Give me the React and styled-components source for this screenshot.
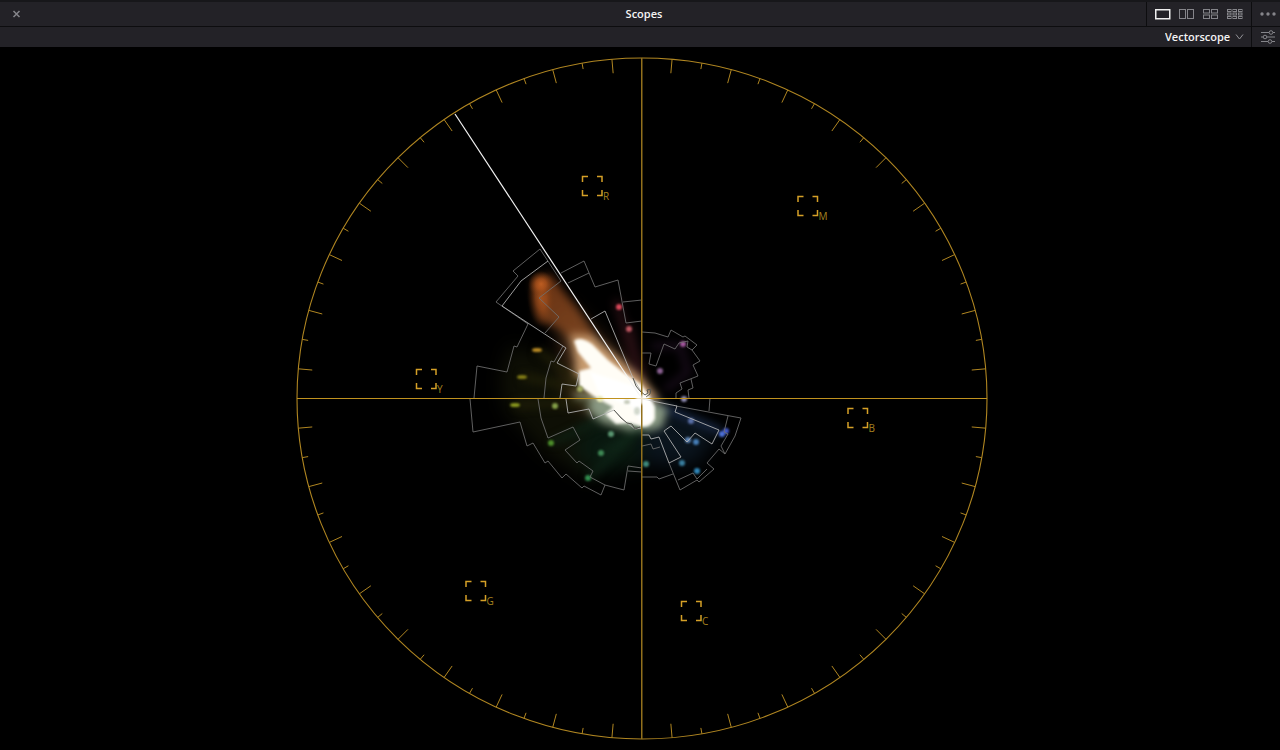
import React from 'react';
import styled, { createGlobalStyle } from 'styled-components';

const GlobalStyle = createGlobalStyle`
  * { box-sizing: border-box; }
  body {
    margin: 0;
    background: #000;
    color: #f4f4f4;
    font-family: "Open Sans", sans-serif;
    font-size: 11px;
    overflow: hidden;
  }
`;

const Page = styled.div`
  display: flex;
  flex-direction: column;
  height: 100vh;
`;

const TitleBar = styled.header`
  display: grid;
  grid-template-columns: 1fr auto 1fr;
  align-items: center;
  flex: none;
  height: 27px;
  background: #232227;
  border-top: 2px solid #17171a;
  border-bottom: 1px solid #0d0d0f;
`;

const Title = styled.h1`
  margin: 0 0 0 8px;
  font-size: 11px;
  line-height: 24px;
  font-weight: 600;
`;

const ToolBar = styled.div`
  display: flex;
  justify-content: flex-end;
  align-items: stretch;
  flex: none;
  height: 20px;
  background: #232227;
`;

const IconButton = styled.button`
  display: flex;
  align-items: center;
  justify-content: center;
  width: ${(p) => p.$width}px;
  height: 100%;
  padding: 0;
  border: 0;
  background: none;
  color: ${(p) => (p.$active ? '#efefef' : '#85858a')};
  svg { display: block; }
`;

const CloseCell = styled.div`
  padding-left: 8px;
  height: 24px;
`;

const Actions = styled.div`
  display: flex;
  justify-content: flex-end;
  height: 24px;
`;

const LayoutGroup = styled.div`
  display: flex;
  padding: 0 4px 0 3px;
  border-left: 1px solid #0d0d0f;
`;

const EndCell = styled.div`
  width: 29px;
  padding-left: 3px;
  border-left: 1px solid #0d0d0f;
`;

const ScopePicker = styled.label`
  position: relative;
  display: flex;
  align-items: center;
  padding-right: 7px;
  svg {
    position: absolute;
    right: 7px;
    pointer-events: none;
  }
`;

const ScopeSelect = styled.select`
  appearance: none;
  width: 79px;
  height: 20px;
  padding: 0;
  border: 0;
  background: transparent;
  color: #f4f4f4;
  font: 600 11px/20px "Open Sans", sans-serif;
`;

const ScopeArea = styled.main`
  flex: 1;
  min-height: 0;
  background: #000;
`;

const Plot = styled.svg`
  display: block;
  width: 100%;
  height: 100%;
`;

const TargetLabel = styled.text`
  fill: #a5801f;
  font-family: "Open Sans", sans-serif;
  font-size: 10px;
`;

const CX = 642;
const CY = 398.5;
const RX = 345;
const RY = 340.5;

const LAYOUTS = [
  { name: 'Single scope', cols: 1, rows: 1 },
  { name: 'Two scopes', cols: 2, rows: 1 },
  { name: 'Four scopes', cols: 2, rows: 2 },
  { name: 'Nine scopes', cols: 3, rows: 3 },
];

function LayoutIcon({ cols, rows }) {
  if (cols === 1) {
    return (
      <svg width="16" height="12" viewBox="0 0 16 12" fill="none" stroke="currentColor">
        <rect x="0.75" y="1.75" width="14" height="9" strokeWidth="1.5" />
      </svg>
    );
  }
  const w = cols === 2 ? 6 : 3.5;
  const h = rows === 1 ? 9 : rows === 2 ? 3.5 : 2;
  const stepX = cols === 2 ? 8 : 5.5;
  const stepY = rows === 2 ? 5.5 : 3.5;
  const cells = [];
  for (let r = 0; r < rows; r++) {
    for (let c = 0; c < cols; c++) {
      cells.push(
        <rect key={`${r}-${c}`} x={0.5 + c * stepX} y={1.5 + r * stepY} width={w} height={h} />
      );
    }
  }
  return (
    <svg width="16" height="12" viewBox="0 0 16 12" fill="none" stroke="currentColor">
      {cells}
    </svg>
  );
}

const TARGETS = [
  { label: 'R', x: 592, y: 186 },
  { label: 'M', x: 807.5, y: 206 },
  { label: 'Y', x: 426, y: 379 },
  { label: 'B', x: 857.5, y: 418 },
  { label: 'G', x: 475.5, y: 591 },
  { label: 'C', x: 691, y: 611 },
];

const DOTS = [
  [619, 307, '#d9475a'], [629, 329, '#bd5660'], [683, 344, '#a1559c'], [660, 371, '#8a6090'],
  [684, 399, '#9290b8'], [691, 421, '#5b70a8'], [722, 434, '#4d72d8'], [726, 431, '#4057c8'],
  [688, 440, '#5e86b8'], [696, 442, '#467fb8'], [682, 463, '#397fa0'], [697, 471, '#2f86b8'],
  [646, 464, '#3f8b7d'], [588, 478, '#318e4e'], [601, 453, '#3f8a55'], [611, 434, '#5b9872'],
  [551, 443, '#4c8e2a'], [555, 406, '#84a048'], [600, 399, '#e6eab8'], [580, 389, '#a5ad65'],
];

const STREAKS = [
  [515, 405, '#8a981e'], [522, 377, '#827c16'], [537, 350, '#b98a24'],
];

const DIM = [
  'M540 249 513 271 518 276 496 302 528 324 517 347 514 346 507 372 477 366 474 398',
  'M561 281 539 298 559 317 545 333M563 346 554 362 551 361 546 378 544 398',
  'M540 249 561 281M561 273 584 261 595 287 618 280 626 323 642 321M623 302 642 300M568 283 589 273',
  'M470 399 473 432 520 422 527 446 533 443 545 463 548 461 562 478 566 474 582 488 584 486 601 495 605 485 624 490 628 466 642 468M628 471 642 472',
  'M538 399 541 418 548 438 573 427 580 440 565 450 577 463 579 461 593 471 590 477 605 485',
  'M642 332 655 333 668 337 671 330 683 337 685 336 697 345 692 350 700 361 693 365 698 376 680 383 682 389 676 393 676 398',
  'M691 379 693 388 688 390 689 398M642 353 651 353 649 364 656 366 664 344 675 349 679 343 688 341 687 347 692 350',
  'M676 406 741 418 735 436 725 454 719 449 707 463 714 469 699 482 697 480 680 490 669 463',
  'M710 398 709 411M728 416 724 432 728 434 721 446 725 454M678 480 693 473 697 479 707 469',
  'M642 477 657 477 659 479 673 474M642 446 651 444 653 449 660 447',
];

const BRIGHT = [
  'M548 261 521 281 502 306 566 348 557 363 579 374 576 386 562 384 560 398',
  'M591 319 605 311 633 378 642 393',
  'M566 399 568 413 589 409 593 419 614 410 627 423 635 429 642 428',
  'M642 399 677 406 675 412 719 430 712 444 695 433 687 442 671 426 664 431 681 457 669 463 659 437 651 439 649 435 642 435',
];

function Graticule() {
  const ticks = [];
  for (let deg = 5; deg < 360; deg += 5) {
    if (deg % 90 !== 0) {
      const a = (deg * Math.PI) / 180;
      const len = deg % 10 === 5 ? 14 : 6;
      ticks.push(
        `M${CX + RX * Math.cos(a)} ${CY + RY * Math.sin(a)}L${CX + (RX - len) * Math.cos(a)} ${CY + (RY - len) * Math.sin(a)}`
      );
    }
  }
  return (
    <g fill="none" stroke="#b08621">
      <ellipse cx={CX} cy={CY} rx={RX} ry={RY} strokeWidth="1.1" />
      <path d={ticks.join('')} />
    </g>
  );
}

function Blur({ id, amount }) {
  return (
    <filter id={id} x="-50%" y="-50%" width="200%" height="200%" colorInterpolationFilters="sRGB">
      <feGaussianBlur stdDeviation={amount} />
    </filter>
  );
}

function Trace() {
  return (
    <g>
      <defs>
        <Blur id="soft1" amount="1.1" />
        <Blur id="soft2" amount="1.6" />
        <Blur id="soft4" amount="4" />
        <Blur id="soft9" amount="9" />
        <radialGradient id="ember">
          <stop offset="0" stopColor="#cc6524" />
          <stop offset="0.4" stopColor="#b4561d" stopOpacity="0.8" />
          <stop offset="1" stopColor="#6b3511" stopOpacity="0" />
        </radialGradient>
        <linearGradient id="tail" gradientUnits="userSpaceOnUse" x1="540" y1="280" x2="610" y2="375">
          <stop offset="0" stopColor="#713614" />
          <stop offset="0.6" stopColor="#7a4420" />
          <stop offset="1" stopColor="#d8a478" />
        </linearGradient>
      </defs>
      <g filter="url(#soft9)">
        <path d="M642 399 510 345 500 380 505 410 548 455 590 480 640 455Z" fill="#0e0f05" />
        <path d="M642 405 600 405 570 450 595 475 642 465Z" fill="#09180f" />
        <path d="M642 399 720 430 696 465 645 465Z" fill="#0a141d" />
        <path d="M642 375 560 300 560 340 570 400 600 415 630 410Z" fill="#452b17" />
      </g>
      <g filter="url(#soft4)" fill="none">
        <path d="M652 346 680 346 688 372 665 390" stroke="#180c1a" strokeWidth="6" />
        <path d="M642 392 616 300M642 380 629 325" stroke="#260e12" strokeWidth="7" />
        <path d="M533 280 550 274 578 310 614 365 598 372 560 329 538 320Z" fill="url(#tail)" opacity="0.95" />
        <path d="M570 334 592 336 642 378 658 397 658 424 625 427 594 410 570 387 576 365Z" fill="#c89c70" />
        <path d="M642 399 722 432" stroke="#22365e" strokeWidth="5" />
        <path d="M642 399 668 408 662 428 638 433 600 422 572 394Z" fill="#8a9a84" />
        <path d="M642 428 601 453M642 428 588 478M600 420 551 443" stroke="#0f2618" strokeWidth="5" />
        <path d="M590 390 537 350M590 390 522 377M590 402 515 405" stroke="#1f1e07" strokeWidth="7" />
      </g>
      <ellipse cx="541" cy="298" rx="14" ry="29" fill="url(#ember)" opacity="0.6" transform="rotate(-4 541 298)" />
      <circle cx="541" cy="284" r="13" fill="url(#ember)" opacity="0.8" />
      <g filter="url(#soft2)">
        <path d="M574 341Q580 336 592 344L608 360 623 372 641 384 649 395 655 407 655 419Q650 428 642 427L629 423 616 424 605 414 613 407 598 399 579 386 579 371 591 368 578 352Z" fill="#fffdf6" />
        <path d="M590 372 640 388 652 402 652 420 640 422 632 406 600 396Z" fill="#fff" />
      </g>
      <g filter="url(#soft1)">
        <ellipse cx="627" cy="402" rx="3" ry="2" fill="#c4c8b6" />
        <ellipse cx="637" cy="411" rx="3" ry="4" fill="#d2d8cc" />
        {DOTS.map(([x, y, color]) => <circle key={`${x}-${y}`} cx={x} cy={y} r="3" fill={color} />)}
        {STREAKS.map(([x, y, color]) => <ellipse key={x} cx={x} cy={y} rx="5" ry="2" fill={color} />)}
      </g>
      <g fill="none" strokeWidth="1">
        <path d={DIM.join('')} stroke="#707070" strokeOpacity="0.85" />
        <path d={BRIGHT.join('')} stroke="#b6b6b6" strokeOpacity="0.85" />
        <path d="M455 114 642 399" stroke="#f3f3f3" strokeWidth="1.2" />
        <path d="M614 410 621 418 627 423 632 424 635 429 640 427M633 378 636 386 640 391 645 395 648 393 647 390 651 389 650 394 646 397" stroke="#55554f" />
      </g>
    </g>
  );
}

export default function App() {
  return (
    <Page>
      <GlobalStyle />
      <TitleBar>
        <CloseCell>
          <IconButton $width={17} aria-label="Close">
            <svg width="9" height="9" viewBox="0 0 9 9" fill="none" stroke="currentColor" strokeWidth="1.5">
              <path d="M1.5 1 7.5 7M7.5 1 1.5 7" />
            </svg>
          </IconButton>
        </CloseCell>
        <Title>Scopes</Title>
        <Actions>
          <LayoutGroup>
            {LAYOUTS.map((l, i) => (
              <IconButton key={l.name} $width={i === 0 ? 25 : 24} $active={i === 0} aria-label={l.name}>
                <LayoutIcon cols={l.cols} rows={l.rows} />
              </IconButton>
            ))}
          </LayoutGroup>
          <EndCell>
            <IconButton $width={25} aria-label="More options">
              <svg width="16" height="6" viewBox="0 0 16 6" fill="currentColor">
                <circle cx="2" cy="3" r="1.7" /><circle cx="8" cy="3" r="1.7" /><circle cx="14" cy="3" r="1.7" />
              </svg>
            </IconButton>
          </EndCell>
        </Actions>
      </TitleBar>
      <ToolBar>
        <ScopePicker>
          <ScopeSelect aria-label="Scope type" defaultValue="Vectorscope">
            <option>Vectorscope</option>
          </ScopeSelect>
          <svg width="9" height="6" viewBox="0 0 9 6" fill="none" stroke="#929297">
            <path d="M1 0.5 4.5 5 8 0.5" />
          </svg>
        </ScopePicker>
        <EndCell>
          <IconButton $width={25} aria-label="Scope settings">
            <svg width="14" height="14" viewBox="0 0 14 14" fill="none" stroke="currentColor">
              <path d="M0 2.5H8M12 2.5H14M0 7H2M6 7H14M0 11.5H7M11 11.5H14" />
              <circle cx="10" cy="2.5" r="1.8" /><circle cx="4" cy="7" r="1.8" /><circle cx="9" cy="11.5" r="1.8" />
            </svg>
          </IconButton>
        </EndCell>
      </ToolBar>
      <ScopeArea>
        <Plot viewBox="0 47 1280 703" role="img" aria-label="Vectorscope">
          <Trace />
          <Graticule />
          <path d="M641.75 58V739" stroke="#92701c" strokeWidth="1.5" />
          <path d="M297 398.5H987" stroke="#c0921f" />
          <path d="M636 394 645 396 650 401 644 405 636 402Z" fill="#fff" opacity="0.75" filter="url(#soft1)" />
          {TARGETS.map(({ label, x, y }) => (
            <g key={label}>
              <path
                transform={`translate(${x} ${y})`}
                d="M-9.5 -4V-9.5H-4M5 -9.5H10V-4M10 4V9.5H5M-4 9.5H-9.5V4"
                fill="none"
                stroke="#d5a027"
                strokeWidth="1.5"
              />
              <TargetLabel x={x + 11} y={y + 14}>{label}</TargetLabel>
            </g>
          ))}
        </Plot>
      </ScopeArea>
    </Page>
  );
}
